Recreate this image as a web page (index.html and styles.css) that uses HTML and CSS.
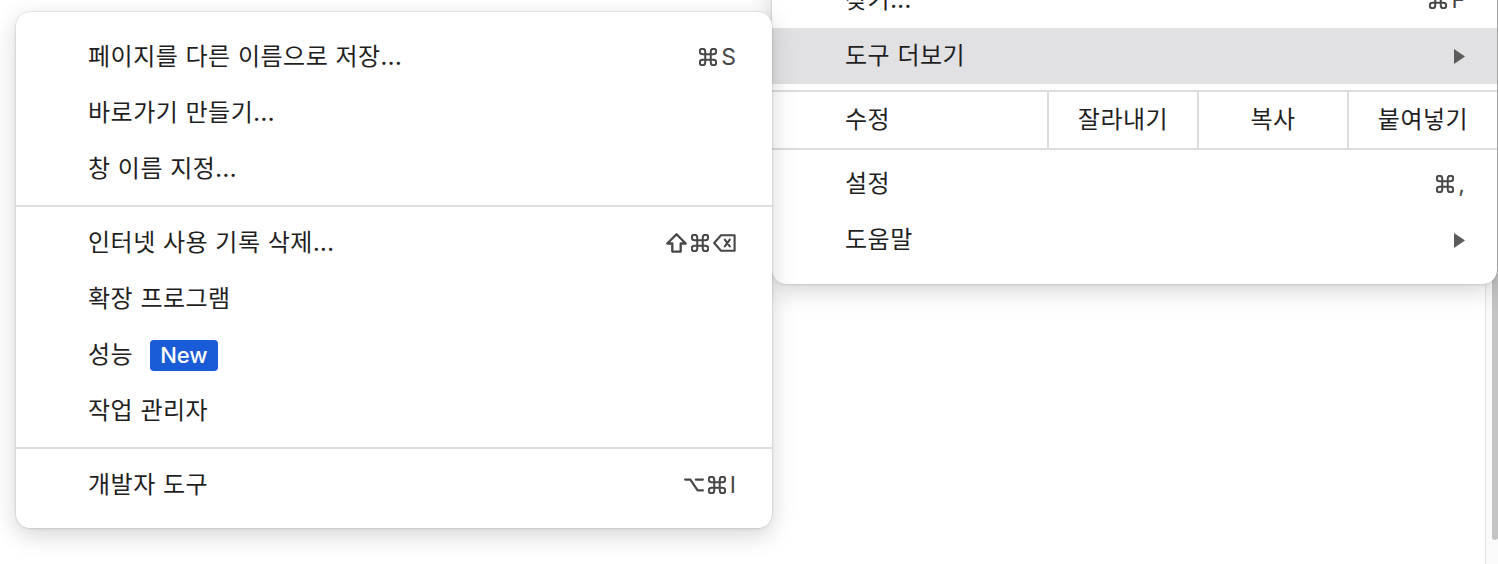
FILE: index.html
```html
<!DOCTYPE html>
<html lang="ko">
<head>
<meta charset="utf-8">
<link rel="stylesheet" href="styles.css">
</head>
<body>
<div class="page">
  <main class="content"></main>
  <div class="scrollbar"><div class="thumb"></div></div>

  <div class="menu sub-menu">
    <div class="item"><span class="label">찾기...</span><span class="keys"><svg class="k cmd" viewBox="2.2 2.2 19.6 19.6"><path d="M15 6v12a3 3 0 1 0 3-3H6a3 3 0 1 0 3 3V6a3 3 0 1 0-3 3h12a3 3 0 1 0-3-3"/></svg><span class="kt">F</span></span></div>
    <div class="item hover"><span class="label">도구 더보기</span><svg class="arrow" viewBox="0 0 11 15"><path d="M0 0L11 7.5L0 15Z"/></svg></div>
    <div class="edit-row">
      <span class="edit-label">수정</span>
      <span class="edit-cell">잘라내기</span>
      <span class="edit-cell">복사</span>
      <span class="edit-cell">붙여넣기</span>
    </div>
    <div class="item"><span class="label">설정</span><span class="keys"><svg class="k cmd" viewBox="2.2 2.2 19.6 19.6"><path d="M15 6v12a3 3 0 1 0 3-3H6a3 3 0 1 0 3 3V6a3 3 0 1 0-3 3h12a3 3 0 1 0-3-3"/></svg><span class="kt">,</span></span></div>
    <div class="item"><span class="label">도움말</span><svg class="arrow" viewBox="0 0 11 15"><path d="M0 0L11 7.5L0 15Z"/></svg></div>
  </div>

  <div class="menu main-menu">
    <div class="item"><span class="label">페이지를 다른 이름으로 저장...</span><span class="keys"><svg class="k cmd" viewBox="2.2 2.2 19.6 19.6"><path d="M15 6v12a3 3 0 1 0 3-3H6a3 3 0 1 0 3 3V6a3 3 0 1 0-3 3h12a3 3 0 1 0-3-3"/></svg><span class="kt">S</span></span></div>
    <div class="item"><span class="label">바로가기 만들기...</span></div>
    <div class="item"><span class="label">창 이름 지정...</span></div>
    <div class="sep"></div>
    <div class="item"><span class="label">인터넷 사용 기록 삭제...</span><span class="keys"><svg class="k shift" viewBox="2 2.3 20 19"><path d="M12 3.5L3.2 12.3H8V20H16V12.3H20.8Z"/></svg><svg class="k cmd" viewBox="2.2 2.2 19.6 19.6"><path d="M15 6v12a3 3 0 1 0 3-3H6a3 3 0 1 0 3 3V6a3 3 0 1 0-3 3h12a3 3 0 1 0-3-3"/></svg><svg class="k del" viewBox="1 2 23 18"><path d="M9 3.2H22.6V18.8H9L2.2 11Z"/><path d="M12.8 7.6L17.8 14.4M17.8 7.6L12.8 14.4"/></svg></span></div>
    <div class="item"><span class="label">확장 프로그램</span></div>
    <div class="item"><span class="label">성능</span><span class="badge">New</span></div>
    <div class="item"><span class="label">작업 관리자</span></div>
    <div class="sep"></div>
    <div class="item"><span class="label">개발자 도구</span><span class="keys"><svg class="k opt" viewBox="1 4.5 22 15"><path d="M2.2 6H8L16 18H21.8M14 6H21.8"/></svg><svg class="k cmd" viewBox="2.2 2.2 19.6 19.6"><path d="M15 6v12a3 3 0 1 0 3-3H6a3 3 0 1 0 3 3V6a3 3 0 1 0-3 3h12a3 3 0 1 0-3-3"/></svg><span class="kt">I</span></span></div>
  </div>
</div>
</body>
</html>
```

FILE: styles.css
```css
* { box-sizing: border-box; }
html, body {
  margin: 0;
  padding: 0;
  background: #ffffff;
  overflow: hidden;
}
.page {
  position: relative;
  width: 1498px;
  height: 564px;
  display: flex;
  font-family: "Noto Sans CJK KR", "Noto Sans", sans-serif;
  color: #1f1f1f;
}
.content {
  flex: 1;
  background: #ffffff;
}
.scrollbar {
  width: 13px;
  border-left: 1px solid #e4e4e4;
  background: #fafafa;
  padding: 0 1px 0 6px;
}
.thumb {
  width: 6px;
  height: 540px;
  background: #c3c3c3;
  border-radius: 0 0 3px 3px;
}

.menu {
  position: absolute;
  background: #ffffff;
  border-radius: 14px;
  padding: 16px 0;
}
.main-menu {
  left: 16px;
  top: 12px;
  width: 756px;
  padding-top: 17px;
  padding-bottom: 15px;
  z-index: 2;
  box-shadow: 0 0 0 0.5px rgba(0,0,0,0.12), 0 7px 24px rgba(0,0,0,0.17), 0 1px 4px rgba(0,0,0,0.06);
}
.sub-menu {
  left: 772px;
  top: -44px;
  width: 725px;
  z-index: 1;
  box-shadow: 0 0 0 0.5px rgba(0,0,0,0.12), 0 7px 24px rgba(0,0,0,0.17), 0 1px 4px rgba(0,0,0,0.06);
}

.item {
  height: 56px;
  display: flex;
  align-items: center;
  font-size: 24px;
  letter-spacing: 0.5px;
  line-height: 1;
  padding-bottom: 4px !important;
}
.main-menu .item {
  padding: 0 36px 0 72px;
}
.sub-menu .item {
  padding: 0 32px 0 73px;
}
.item.hover {
  background: #e1e1e3;
}
.label {
  flex: 1;
  white-space: nowrap;
}
.main-menu .item .label { flex: 0 0 auto; }
.main-menu .item .keys { margin-left: auto; }

.keys {
  display: flex;
  align-items: center;
  gap: 4px;
  color: #474747;
  padding-top: 4px;
}
.k {
  fill: none;
  stroke: #474747;
  stroke-width: 2.2;
  stroke-linecap: round;
  stroke-linejoin: round;
}
.cmd { width: 18px; height: 18px; }
.shift { width: 21px; height: 20px; stroke-width: 2.2; }
.del { width: 23px; height: 18px; stroke-width: 2.1; }
.opt { width: 20px; height: 14px; stroke-width: 2.4; }
.kt {
  font-family: "Inter", "Liberation Sans", sans-serif;
  font-size: 23px;
  letter-spacing: 0;
  color: #474747;
  line-height: 1;
}
.arrow {
  width: 11px;
  height: 15px;
  fill: #5b5b5b;
  margin-top: 4px;
}

.badge {
  margin-left: 17px;
  background: #1a5cd7;
  color: #ffffff;
  font-family: "Inter", "Liberation Sans", sans-serif;
  font-weight: 500;
  font-size: 22px;
  letter-spacing: 0;
  line-height: 31px;
  height: 31px;
  padding: 0 10px;
  border-radius: 4px;
  margin-top: 4px;
}

.sep {
  height: 2px;
  background: #dedede;
  margin: 8px 0;
}

.edit-row {
  display: flex;
  margin: 6px 0;
  height: 60px;
  border-top: 2px solid #dcdcdc;
  border-bottom: 2px solid #dcdcdc;
  font-size: 24px;
  letter-spacing: 0.5px;
  line-height: 1;
}
.edit-label {
  flex: 1;
  display: flex;
  align-items: center;
  padding-left: 73px;
  padding-bottom: 4px;
}
.edit-cell {
  width: 150px;
  border-left: 2px solid #dcdcdc;
  display: flex;
  align-items: center;
  justify-content: center;
  padding-bottom: 4px;
}
```
